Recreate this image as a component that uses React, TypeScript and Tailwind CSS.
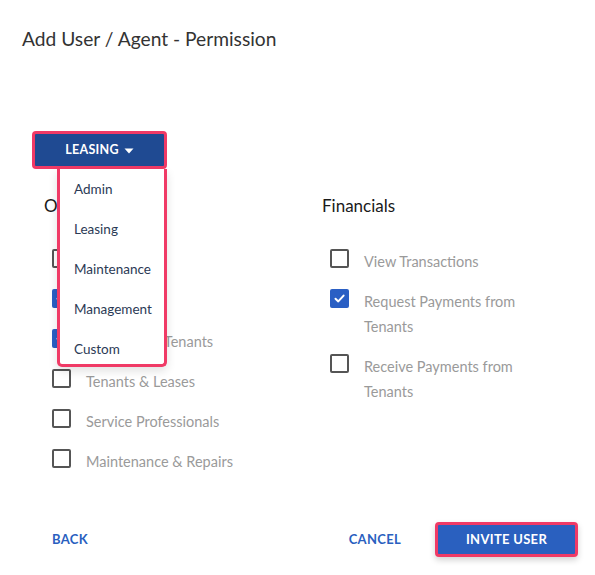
import React from "react";

const PINK = "border-[#f03a66]";

function Box({ checked }: { checked?: boolean }) {
  if (checked) {
    return (
      <div className="w-[19px] h-[19px] shrink-0 rounded-[2px] bg-[#2a5fc4] flex items-center justify-center">
        <svg width="13" height="13" viewBox="0 0 13 13" fill="none">
          <path d="M2.5 6.8 L5.3 9.4 L10.6 3.6" stroke="white" strokeWidth="2" strokeLinecap="round" strokeLinejoin="round" />
        </svg>
      </div>
    );
  }
  return <div className="w-[19px] h-[19px] shrink-0 rounded-[2px] border-2 border-[#555]" />;
}

function Row({ label, checked }: { label: string; checked?: boolean }) {
  return (
    <div className="flex items-start gap-[15px]">
      <Box checked={checked} />
      <span className="text-[14.5px] leading-[25px] text-[#9a9a9a]">{label}</span>
    </div>
  );
}

export default function App() {
  const items = ["Admin", "Leasing", "Maintenance", "Management", "Custom"];
  return (
    <div
      className="w-[595px] h-[575px] bg-white pl-[22px] pr-[17px] flex flex-col overflow-hidden"
      style={{ fontFamily: "Lato, 'Open Sans', sans-serif" }}
    >
      <h1 className="pt-[27px] text-[19.2px] leading-[24px] text-[#333] font-normal">
        Add User / Agent - Permission
      </h1>

      <div className="relative mt-[80px] ml-[10px] w-[135px] z-10">
        <div className={`h-[38px] w-[135px] rounded-[4px] border-[3px] ${PINK} bg-[#1f4a92] flex items-center justify-center gap-[5px] pt-[1px]`}>
          <span className="text-white font-bold text-[12.5px] tracking-[0.3px]">LEASING</span>
          <svg width="10" height="6" viewBox="0 0 10 6">
            <path d="M0.5 0.5 H9.5 L5 5.5 Z" fill="white" />
          </svg>
        </div>
        <div
          className={`absolute left-[25px] top-[38px] w-[110px] h-[198px] overflow-hidden bg-white border-[3px] border-t-0 ${PINK} rounded-b-[5px] shadow-[0_4px_10px_rgba(0,0,0,0.12)]`}
        >
          {items.map((it) => (
            <div key={it} className="h-[40px] flex items-center pl-[14px] text-[13.5px] text-[#2b3a55]">
              {it}
            </div>
          ))}
        </div>
      </div>

      <div className="grid grid-cols-[278px_1fr] mt-[25px] pl-[22px]">
        <div>
          <h2 className="text-[17px] leading-[24px] text-[#1a1a1a]">Operations</h2>
          <div className="mt-[31px] ml-[8px] flex flex-col gap-[15px]">
            <Row label="Properties" />
            <Row label="Listings" checked />
            <Row label="Prospective Tenants" checked />
            <Row label="Tenants & Leases" />
            <Row label="Service Professionals" />
            <Row label="Maintenance & Repairs" />
          </div>
        </div>
        <div>
          <h2 className="text-[17px] leading-[24px] text-[#1a1a1a]">Financials</h2>
          <div className="mt-[31px] ml-[8px] flex flex-col gap-[15px] w-[200px]">
            <Row label="View Transactions" />
            <Row label="Request Payments from Tenants" checked />
            <Row label="Receive Payments from Tenants" />
          </div>
        </div>
      </div>

      <div className="mt-auto mb-[18px] flex items-center">
        <span className="ml-[30px] pt-[1px] text-[13px] font-bold text-[#2a5fbf] tracking-[0.3px]">BACK</span>
        <span className="ml-auto pt-[1px] text-[13px] font-bold text-[#2a5fbf] tracking-[0.3px]">CANCEL</span>
        <div
          className={`ml-[34px] w-[143px] h-[35px] rounded-[4px] border-[3px] ${PINK} bg-[#2a60bf] flex items-center justify-center pt-[1px] shadow-[0_3px_6px_rgba(0,0,0,0.18)]`}
        >
          <span className="text-white font-bold text-[13px] tracking-[0.3px]">INVITE USER</span>
        </div>
      </div>
    </div>
  );
}
